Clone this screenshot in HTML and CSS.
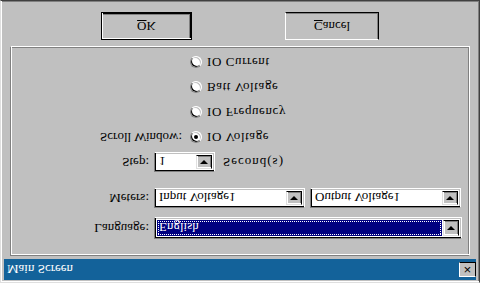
FILE: index.html
```html
<!DOCTYPE html>
<html lang="en">
<head>
  <meta charset="UTF-8" />
  <title>Main Screen</title>
  <link rel="stylesheet" href="styles.css">
</head>
<body>
  <div class="window">
    <div class="titlebar">
      <span class="title">Main Screen</span>
      <span class="close">&#x2715;</span>
    </div>

    <div class="panel">
      <div class="row lang-row">
        <span class="label">Language:</span>
        <div class="combo wide">
          <span class="field selected"><span class="focus">English</span></span>
          <span class="drop"><i class="arrow"></i></span>
        </div>
      </div>

      <div class="row meters-row">
        <span class="label">Meters:</span>
        <div class="combo half">
          <span class="field">Input Voltage1</span>
          <span class="drop"><i class="arrow"></i></span>
        </div>
        <div class="combo half">
          <span class="field">Output Voltage1</span>
          <span class="drop"><i class="arrow"></i></span>
        </div>
      </div>

      <div class="row step-row">
        <span class="label">Step:</span>
        <div class="combo small">
          <span class="field">1</span>
          <span class="drop"><i class="arrow"></i></span>
        </div>
        <span class="unit">Second(s)</span>
      </div>

      <div class="radios">
        <div class="radio-row">
          <span class="label long">Scroll Window:</span>
          <span class="radio checked"></span>
          <span class="opt">IO Voltage</span>
        </div>
        <div class="radio-row">
          <span class="label long"></span>
          <span class="radio"></span>
          <span class="opt">IO Frequency</span>
        </div>
        <div class="radio-row">
          <span class="label long"></span>
          <span class="radio"></span>
          <span class="opt">Batt Voltage</span>
        </div>
        <div class="radio-row">
          <span class="label long"></span>
          <span class="radio"></span>
          <span class="opt">IO Current</span>
        </div>
      </div>
    </div>

    <div class="buttons">
      <button class="btn default"><u>O</u>K</button>
      <button class="btn"><u>C</u>ancel</button>
    </div>
  </div>
</body>
</html>
```

FILE: styles.css
```css
body {
  margin: 0;
  width: 480px;
  height: 283px;
  overflow: hidden;
  background: #c0c0c0;
  font-family: "Liberation Serif", serif;
  font-size: 13px;
  color: #000;
}
/* the capture is mirrored top to bottom */
.window {
  width: 480px;
  height: 283px;
  box-sizing: border-box;
  background: #c0c0c0;
  border-top: 1px solid #dfdfdf;
  border-left: 1px solid #dfdfdf;
  border-right: 1px solid #404040;
  border-bottom: 1px solid #404040;
  box-shadow: inset 1px 1px 0 #fff, inset -1px -1px 0 #808080;
  transform: scaleY(-1);
  padding: 2px 3px;
}
.titlebar {
  height: 21px;
  background: #13629a;
  display: flex;
  align-items: center;
  justify-content: space-between;
  padding: 0 0 0 3px;
}
.title {
  color: #fff;
  font-size: 13px;
}
.close {
  width: 15px;
  height: 13px;
  background: #c0c0c0;
  border-top: 1px solid #fff;
  border-left: 1px solid #fff;
  border-right: 1px solid #000;
  border-bottom: 1px solid #000;
  font-family: "DejaVu Sans", sans-serif;
  font-size: 10px;
  line-height: 13px;
  text-align: center;
}
.panel {
  margin: 3px 6px 0 6px;
  height: 210px;
  box-sizing: border-box;
  border-top: 1px solid #808080;
  border-left: 1px solid #808080;
  border-right: 1px solid #fff;
  border-bottom: 1px solid #fff;
  box-shadow: inset 1px 1px 0 #fff, inset -1px -1px 0 #808080;
  padding: 16px 4px 0 2px;
}
.row {
  display: flex;
  align-items: center;
  gap: 5px;
}
.label {
  width: 136px;
  text-align: right;
  flex-shrink: 0;
}
.label.long {
  width: 169px;
  padding-right: 4px;
}
.meters-row {
  margin-top: 9px;
}
.step-row {
  margin-top: 16px;
}
.combo {
  display: flex;
  height: 20px;
  box-sizing: border-box;
  background: #fff;
  border-top: 1px solid #808080;
  border-left: 1px solid #808080;
  border-right: 1px solid #fff;
  border-bottom: 1px solid #fff;
  box-shadow: inset 1px 1px 0 #000, inset -1px -1px 0 #c0c0c0;
  padding: 2px;
}
.combo.wide {
  width: 308px;
  height: 22px;
}
.combo.half {
  width: 151px;
}
.combo.small {
  width: 61px;
}
.field {
  flex: 1;
  line-height: 15px;
  padding-left: 2px;
  white-space: nowrap;
  overflow: hidden;
}
.field.selected {
  background: #000080;
  color: #fff;
  padding: 1px;
  margin-right: 1px;
}
.focus {
  display: block;
  height: 100%;
  box-sizing: border-box;
  outline: 1px dotted #fff;
  outline-offset: -1px;
  padding-left: 1px;
}
.drop {
  width: 16px;
  background: #c0c0c0;
  box-sizing: border-box;
  border-top: 1px solid #dfdfdf;
  border-left: 1px solid #dfdfdf;
  border-right: 1px solid #000;
  border-bottom: 1px solid #000;
  box-shadow: inset 1px 1px 0 #fff, inset -1px -1px 0 #808080;
  display: flex;
  align-items: center;
  justify-content: center;
}
.arrow {
  width: 0;
  height: 0;
  border-left: 4px solid transparent;
  border-right: 4px solid transparent;
  border-top: 4px solid #000;
}
.unit {
  margin-left: 3px;
  letter-spacing: 1px;
}
.radios {
  margin-top: 7px;
  display: flex;
  flex-direction: column;
  gap: 9px;
}
.radio-row {
  display: flex;
  align-items: center;
  height: 16px;
  gap: 4px;
}
.opt {
  letter-spacing: 0.6px;
}
.radio {
  width: 12px;
  height: 12px;
  box-sizing: border-box;
  border-radius: 50%;
  background: #fff;
  border: 1px solid;
  border-color: #808080 #fff #fff #808080;
  box-shadow: inset 1px 1px 0 #000, inset -1px -1px 0 #c0c0c0;
  position: relative;
  margin-right: 1px;
}
.radio.checked::after {
  content: "";
  position: absolute;
  left: 3px;
  top: 3px;
  width: 4px;
  height: 4px;
  border-radius: 50%;
  background: #000;
}
.buttons {
  display: flex;
  gap: 93px;
  margin-left: 97px;
  margin-top: 6px;
}
.btn {
  width: 94px;
  height: 28px;
  font-family: "Liberation Serif", serif;
  font-size: 13px;
  background: #c0c0c0;
  border-top: 1px solid #fff;
  border-left: 1px solid #fff;
  border-right: 1px solid #000;
  border-bottom: 1px solid #000;
  box-shadow: inset -1px -1px 0 #808080;
  padding: 0;
}
.btn.default {
  width: 91px;
  border: 1px solid #000;
  box-shadow: inset 1px 1px 0 #fff, inset -1px -1px 0 #000, inset -2px -2px 0 #808080;
}
```
